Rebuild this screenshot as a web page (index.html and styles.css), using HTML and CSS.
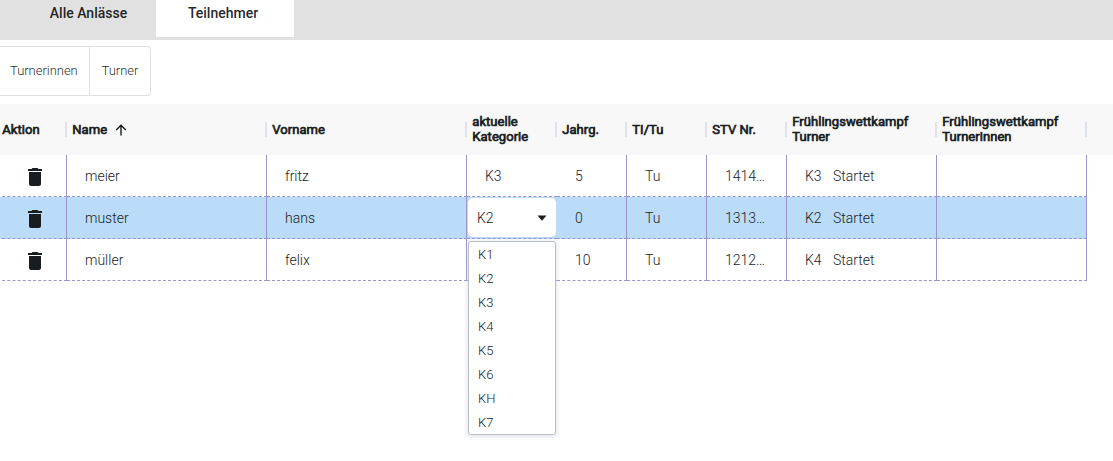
FILE: index.html
```
<!DOCTYPE html>
<html lang="de">
<head>
<meta charset="utf-8">
<title>Teilnehmer</title>
<link rel="stylesheet" href="styles.css">
</head>
<body>
<svg class="defs" width="0" height="0"><symbol id="trash" viewBox="0 0 24 24"><path d="M6 19c0 1.100.9 2 2 2h8c1.100 0 2-.9 2-2V7H6v12zM19 4h-3.500l-1-1h-5l-1 1H5v2h14V4z"/></symbol></svg>
<nav class="tabs"><a class="tab">Alle Anlässe</a><a class="tab active">Teilnehmer</a></nav>
<div class="toolbar"><button class="toggle first">Turnerinnen</button><button class="toggle">Turner</button></div>
<div class="grid">
  <div class="row head">
    <div class="th">Aktion</div>
    <div class="th">Name<svg class="sort" viewBox="0 0 12 12"><path d="M6 11.500V1.200M1.200 6L6 1.200L10.800 6"/></svg></div>
    <div class="th">Vorname</div>
    <div class="th double">aktuelle<br>Kategorie</div>
    <div class="th">Jahrg.</div>
    <div class="th">TI/Tu</div>
    <div class="th">STV Nr.</div>
    <div class="th double">Frühlingswettkampf<br>Turner</div>
    <div class="th double">Frühlingswettkampf<br>Turnerinnen</div>
  </div>
  <div class="row">
    <div class="td action"><svg class="trash"><use href="#trash"/></svg></div><div class="td">meier</div><div class="td">fritz</div><div class="td open">K3</div><div class="td">5</div><div class="td">Tu</div><div class="td">1414…</div><div class="td"><span class="cat">K3</span>Startet</div><div class="td"></div>
  </div>
  <div class="row selected">
    <div class="td action"><svg class="trash"><use href="#trash"/></svg></div><div class="td">muster</div><div class="td">hans</div>
    <div class="td open editing">
      <div class="select">K2<svg class="caret" viewBox="0 0 10 6"><path d="M.5 .5h9L5 5.800z"/></svg></div>
      <ul class="menu"><li>K1</li><li>K2</li><li>K3</li><li>K4</li><li>K5</li><li>K6</li><li>KH</li><li>K7</li></ul>
    </div>
    <div class="td">0</div><div class="td">Tu</div><div class="td">1313…</div><div class="td"><span class="cat">K2</span>Startet</div><div class="td"></div>
  </div>
  <div class="row">
    <div class="td action"><svg class="trash"><use href="#trash"/></svg></div><div class="td">müller</div><div class="td">felix</div><div class="td open"></div><div class="td">10</div><div class="td">Tu</div><div class="td">1212…</div><div class="td"><span class="cat">K4</span>Startet</div><div class="td"></div>
  </div>
</div>
</body>
</html>
```
FILE: styles.css
```
* { box-sizing: border-box; }
body { margin: 0; min-height: 461px; background: #fff; color: #181d1f; font-family: Roboto, sans-serif; }
.defs { display: block; }
.tabs { display: flex; height: 40px; background: #e1e1e1; padding-left: 21px; }
.tab { height: 37px; width: 135px; padding-top: 3px; text-align: center; font-size: 14px; line-height: 20px; font-weight: 500; color: rgba(0, 0, 0, .87); }
.tab.active { width: 138px; padding-right: 4px; background: #fff; }
.toolbar { display: flex; padding-top: 6px; height: 64px; }
.toggle { height: 50px; width: 61px; padding: 0 0 2px; border: 1px solid #e0e0e0; border-left: 0; border-radius: 0 4px 4px 0; background: #fff; font: 300 13px Roboto, sans-serif; letter-spacing: -.03px; color: rgba(0, 0, 0, .87); }
.toggle.first { width: 90px; padding-left: 10px; border-radius: 0; text-align: left; }
.row { display: grid; grid-template-columns: 67px 200px 200px 90px 70px 80px 80px 150px 150px; height: 42px; }
.head { height: 51px; background: #f8f8f8; }
.th { position: relative; display: flex; align-items: center; padding: 0 0 0 5.300px; font-size: 13px; line-height: 15px; font-weight: 400; letter-spacing: .04px; -webkit-text-stroke: .7px #181d1f; white-space: nowrap; }
.th.double { padding-bottom: 2px; }
.th:first-child { padding-left: 2.300px; }
.th::after { content: ""; position: absolute; right: 0; top: 18px; width: 2px; height: 15px; background: #dde2eb; }
.sort { width: 12px; height: 12px; margin-left: 7.500px; fill: none; stroke: #181d1f; stroke-width: 1.4; }
.td { position: relative; display: flex; align-items: center; padding-left: 18px; border-right: 1px solid #9a95ce; border-bottom: 1px dashed #9a95ce; font-size: 14px; font-weight: 300; white-space: nowrap; }
.td.action { margin-left: -3px; padding: 2px 0 0 26px; }
.td.open { border-right: 0; }
.selected .td { background-color: #badcf8; }
.trash { width: 24px; height: 24px; fill: #181d1f; }
.cat { width: 28px; }
.td.editing { padding: 1px 1px 1px 1px; }
.select { display: flex; align-items: center; justify-content: space-between; width: 88px; height: 39px; padding: 0 9px; border-radius: 5px; background: #fff; }
.caret { width: 10px; height: 6px; fill: #181d1f; }
.menu { position: absolute; z-index: 2; left: 1px; top: 44px; width: 88px; height: 194px; margin: 0; padding: 1px 0 0 9px; list-style: none; border: 1px solid #babfc7; border-radius: 3px; background: #fff; box-shadow: 0 1px 4px 1px rgba(186, 191, 199, .4); font-size: 13px; line-height: 24px; }
```
